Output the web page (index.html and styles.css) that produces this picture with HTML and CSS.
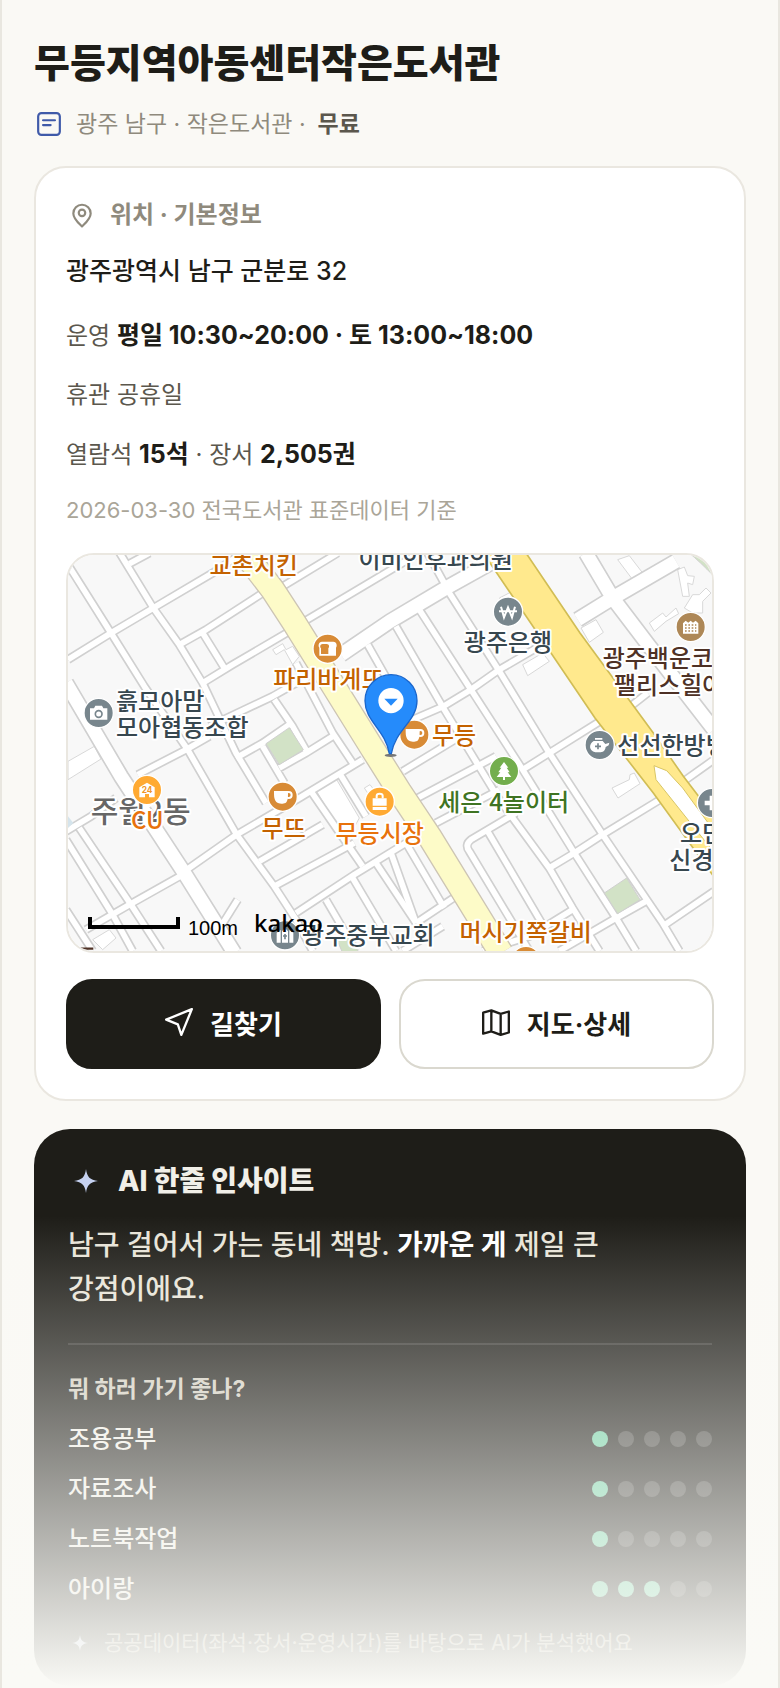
FILE: index.html
```html
<!DOCTYPE html>
<html lang="ko">
<head>
    <meta charset="UTF-8">
    <meta name="viewport" content="width=device-width, initial-scale=1.0">
    <title>무등지역아동센터작은도서관</title>
    <link rel="stylesheet" href="styles.css">
</head>
<body>
    <main class="page">
        <header class="page-header">
            <h1>무등지역아동센터작은도서관</h1>
            <p class="meta">
                <svg class="meta-icon" viewBox="0 0 24 24" aria-hidden="true">
                    <rect x="2" y="2" width="20" height="20" rx="3"/>
                    <path d="M6.500 8.500h11M6.500 13h7"/>
                </svg>
                <span>광주 남구 · 작은도서관 ·</span>
                <strong>무료</strong>
            </p>
        </header>

        <section class="card">
            <h2 class="card-title">
                <svg class="title-icon" viewBox="0 0 24 24" aria-hidden="true">
                    <path d="M20 10.500c0 5-5.500 9.500-8 12-2.500-2.500-8-7-8-12a8 8 0 0 1 16 0z"/>
                    <circle cx="12" cy="10" r="3"/>
                </svg>
                위치 · 기본정보
            </h2>
            <p class="address">광주광역시 남구 군분로 32</p>
            <ul class="info">
                <li>운영 <strong>평일 10:30~20:00 · 토 13:00~18:00</strong></li>
                <li>휴관 공휴일</li>
                <li>열람석 <strong>15석</strong> · 장서 <strong>2,505권</strong></li>
            </ul>
            <p class="source">2026-03-30 전국도서관 표준데이터 기준</p>

            <div class="map">
                <svg viewBox="6 6 1932 1188" preserveAspectRatio="xMidYMid slice">
                    <defs>
                        <g id="alleys">
                            <path d="M6 35L135 240 235 400 365 590 512 845 625 1000 690 1100 740 1194"/>
                            <path d="M155 -10L262 165 340 275 410 390 510 600 600 750"/>
                            <path d="M6 320L135 240 262 165 440 60 530 0M190 32L250 0"/>
                            <path d="M340 275L420 230 590 120M410 390L500 335 665 238M410 240L475 345"/>
                            <path d="M215 665L360 590 430 550M355 955L512 845 700 735 890 620M350 965L190 1055 60 1130"/>
                            <path d="M40 825L195 1055 285 1194M0 860L140 1085 200 1194M0 1070L80 1194M0 835L75 790 150 735"/>
                            <path d="M430 520L620 430 700 385M625 440L680 520 725 600M510 615L590 570 670 515M590 580L655 690M640 645L720 600 800 550"/>
                            <path d="M690 330L800 540 860 630M580 925L770 815M625 1000L865 870M690 1080L865 965 1020 870"/>
                            <path d="M735 715L890 940M820 660L900 790M780 1040L870 1194M860 975L990 1194M930 930L1050 1110"/>
                            <path d="M515 1040L465 1120M650 100L815 0M715 205L972 52 1060 0M905 275L970 390"/>
                            <path d="M1085 0L1140 100M990 220L1132 465 1300 740 1450 945 1520 1065 1600 1194"/>
                            <path d="M1060 170L1215 410 1370 650 1525 900 1650 1095 1710 1194"/>
                            <path d="M1150 120L1300 355 1450 600 1610 845 1790 1110 1840 1194"/>
                            <path d="M1040 500L1132 460 1215 410 1300 350 1420 280M1370 650L1450 600 1610 500M1450 945L1525 900 1610 845 1790 735"/>
                            <path d="M1010 655L1200 540M1055 735L1290 610M1110 810L1300 710M1250 1194L1390 1150 1520 1070"/>
                            <path d="M1350 780L1215 860Q1195 875 1210 895L1390 1194M1262 830L1430 1115M1480 1194L1650 1095 1740 1045M1790 1120L1944 1015"/>
                            <path d="M975 900L1050 1110M1020 870L1135 1065M1050 1110L1170 1030M1010 1194L1130 1120M1700 455L1745 420M1860 680L1944 620"/>
                        </g>
                        <g id="streets">
                            <path d="M0 390L165 670 355 960 505 1200"/>
                            <path d="M825 305L972 205 1140 105 1310 10"/>
                            <path d="M1535 200L1640 135 1830 25M1560 0L1640 135 1750 280 1944 530"/>
                        </g>
                    </defs>

                    <rect class="land" x="0" y="0" width="1944" height="1200"/>
                    <g class="building">
                        <path d="M6 625L85 580 105 618 6 680z"/>
                        <path d="M620 290L650 272 660 290 680 280 700 310 680 335 655 290 630 305z"/>
                        <path d="M752 715L812 680 880 795 850 850 820 830z"/>
                        <path d="M895 705L912 695 935 725 915 735z"/>
                        <path d="M80 1160L130 1130 150 1155 110 1190z"/>
                        <path d="M1300 135L1345 112 1360 140 1318 165z"/>
                        <path d="M1370 335L1430 300 1450 325 1385 368z"/>
                        <path d="M1545 225L1590 200 1612 238 1570 268z"/>
                        <path d="M1638 705L1690 680 1692 665 1705 660 1722 692 1656 735z"/>
                        <path d="M1655 20L1690 8 1730 60 1700 80z"/>
                        <path d="M1750 210L1790 180 1800 192 1830 165 1838 182 1800 205 1765 235z"/>
                        <path d="M1835 50L1855 42 1865 68 1885 70 1880 95 1865 90 1870 130 1850 130z"/>
                        <path d="M1855 165L1880 125 1900 125 1920 105 1935 120 1910 145 1910 180 1880 180z"/>
                    </g>

                    <use href="#alleys" class="alley-edge"/>
                    <use href="#streets" class="street-edge"/>
                    <use href="#alleys" class="alley"/>
                    <use href="#streets" class="street"/>

                    <g class="park">
                        <path d="M600 572L670 524 712 590 640 635z"/>
                        <path d="M1615 1020L1682 975 1722 1040 1655 1082z"/>
                        <path d="M1870 0Q1900 25 1944 70V0z"/>
                        <path d="M815 1165L850 1150 880 1200H830z"/>
                    </g>
                    <path class="water" d="M6 790L22 810 6 825z"/>

                    <path class="avenue-edge" d="M535 0L620 110 685 210 915 580 1000 715 1090 850 1305 1200"/>
                    <path class="avenue" d="M535 0L620 110 685 210 915 580 1000 715 1090 850 1305 1200"/>
                    <path class="highway" d="M1250 0L1272 30 1587 495 1762 720 1950 980V798L1852 670 1762 540 1542 240 1380 0z"/>
                    <path class="island" d="M1764 638L1802 653 1850 705 1928 812 1950 845V905L1880 818 1770 680z"/>

                    <!-- place labels -->
                    <g class="label">
                        <text class="food" x="563" y="63" text-anchor="middle">교촌치킨</text>
                        <text x="1109" y="45" text-anchor="middle">이비인후과의원</text>
                        <text class="food" x="787" y="405" text-anchor="middle">파리바게뜨</text>
                        <text x="150" y="470">흙모아맘</text>
                        <text x="150" y="549">모아협동조합</text>
                        <text class="district" x="224" y="807" text-anchor="middle">주월2동</text>
                        <text class="shop" x="244" y="828" text-anchor="middle">CU</text>
                        <text class="food" x="653" y="852" text-anchor="middle">무뜨</text>
                        <text class="shop" x="941" y="866" text-anchor="middle">무등시장</text>
                        <text x="907" y="1173" text-anchor="middle">광주중부교회</text>
                        <text x="1326" y="295" text-anchor="middle">광주은행</text>
                        <text class="food" x="1098" y="573">무등</text>
                        <text class="nature" x="1313" y="774" text-anchor="middle">세은 4놀이터</text>
                        <text class="home" x="1610" y="342">광주백운코</text>
                        <text class="home" x="1644" y="422">팰리스힐아</text>
                        <text x="1654" y="604">선선한방병</text>
                        <text x="1842" y="868">오민</text>
                        <text x="1810" y="947">신경외</text>
                        <text class="food" x="1379" y="1164" text-anchor="middle">머시기쪽갈비</text>
                    </g>

                    <!-- place markers -->
                    <g class="marker" transform="translate(98 480)">
                        <circle class="gray" r="44"/>
                        <path class="fill" d="M-26 -14h12l4-8h20l4 8h12v34h-52z"/>
                        <circle class="gray-line" cy="3" r="10"/>
                    </g>
                    <g class="marker" transform="translate(243 711)">
                        <circle class="amber" r="44"/>
                        <path class="fill" d="M-23 22v-30L0-22 23-8v30H6V12h-12v10z"/>
                        <text class="num" y="9" text-anchor="middle">24</text>
                    </g>
                    <g class="marker" transform="translate(650 731)">
                        <circle class="orange" r="44"/>
                        <path class="fill" d="M-26 -17h42v10c0 30-10 28-20 28s-22-4-22-28z"/>
                        <circle class="ring" cx="18" cy="-5" r="9"/>
                    </g>
                    <g class="marker" transform="translate(1045 545)">
                        <circle class="orange" r="44"/>
                        <path class="fill" d="M-26 -17h42v10c0 30-10 28-20 28s-22-4-22-28z"/>
                        <circle class="ring" cx="18" cy="-5" r="9"/>
                    </g>
                    <g class="marker" transform="translate(941 746)">
                        <circle class="amber" r="44"/>
                        <path class="fill" d="M-21 -10h42V12h-42zM-21 16h42v9h-42z"/>
                        <path class="ring" d="M-9 -10v-8q0-6 9-6t9 6v8"/>
                    </g>
                    <g class="marker" transform="translate(657 1147)">
                        <circle class="gray" r="44"/>
                        <path class="fill" d="M-25 22v-30l12-8v38zM25 22v-30l-12-8v38zM-9 22v-34L0-22 9-12v34z"/>
                        <path class="gray-line" d="M0-4v16M-6 2h12"/>
                    </g>
                    <g class="marker" transform="translate(785 287)">
                        <circle class="orange" r="44"/>
                        <path class="fill" d="M-17 -21h34c11 0 12 14 8 18v24h-50v-24c-4-4-3-18 8-18z"/>
                        <path class="crust" d="M-15 -14h12c8 0 9 9 5 13v17h-22v-17c-4-4-3-13 5-13z"/>
                    </g>
                    <g class="marker" transform="translate(1326 176)">
                        <circle class="gray" r="44"/>
                        <path class="ring" d="M-21 -15l9 32L0-13l12 30 9-32M-27 -1h54"/>
                    </g>
                    <g class="marker" transform="translate(1314 654)">
                        <circle class="green" r="44"/>
                        <path class="fill" d="M0-27l13 17H8l9 14h-6l11 14H3v9h-6v-9h-19l11-14h-6l9-14h-5z"/>
                    </g>
                    <g class="marker" transform="translate(1601 576)">
                        <circle class="gray" r="44"/>
                        <path class="fill" d="M-18 -12h27l8 9 12-4-2 8-9 5c-2 12-8 16-19 16h-12c-20-4-20-26-5-34zM-14 -21H8v5h-22z"/>
                        <path class="gray-line" d="M-5 -5v18M-14 4h18"/>
                    </g>
                    <g class="marker" transform="translate(1874 222)">
                        <circle class="brown" r="44"/>
                        <path class="fill" d="M-23 20v-31l8-8 8 6 7-6 7 6 8-6 8 8v31z"/>
                        <path class="windows" d="M-17 -6h34M-17 3h34M-17 12h34"/>
                    </g>
                    <g class="marker" transform="translate(1938 750)">
                        <circle class="gray" r="44"/>
                        <path class="fill" d="M-7 -22H7v15h15V7H7v15H-7V7h-15V-7h15z"/>
                    </g>
                    <g class="marker" transform="translate(1380 1224)">
                        <circle class="orange" r="44"/>
                    </g>
                    <path class="corner-mark" d="M44 1187h38"/>

                    <!-- library pin -->
                    <ellipse class="pin-shadow" cx="974" cy="607" rx="18" ry="5"/>
                    <path class="pin" d="M970 602C958 530 897 505 897 443a78 78 0 0 1 156 0C1053 505 988 530 976 602z"/>
                    <circle class="pin-hole" cx="975" cy="443" r="38"/>
                    <path class="pin-arrow" d="M955 437h40l-20 21z"/>

                    <!-- scale -->
                    <path class="scale-bar" d="M72 1092v30h264v-30"/>
                    <text class="scale-text" x="366" y="1145">100m</text>
                    <text class="brand" x="564" y="1138">kakao</text>
                </svg>
            </div>

            <div class="actions">
                <button type="button" class="btn btn-dark">
                    <svg viewBox="0 0 24 24" aria-hidden="true"><path d="M23 1L1 10l10 4 3 9z"/></svg>
                    길찾기
                </button>
                <button type="button" class="btn btn-light">
                    <svg viewBox="0 0 24 24" aria-hidden="true"><path d="M1 4l7-2 8 3 7-2v18l-7 2-8-3-7 2zM8 2v18M16 5v18"/></svg>
                    지도·상세
                </button>
            </div>
        </section>

        <section class="insight">
            <h2 class="insight-title">
                <svg viewBox="0 0 24 24" aria-hidden="true"><path d="M12 0c1 8 4 11 12 12-8 1-11 4-12 12-1-8-4-11-12-12 8-1 11-4 12-12z"/></svg>
                AI 한줄 인사이트
            </h2>
            <p class="insight-text">남구 걸어서 가는 동네 책방. <strong>가까운 게</strong> 제일 큰 강점이에요.</p>
            <h3>뭐 하러 가기 좋나?</h3>
            <ul class="scores">
                <li>조용공부 <span class="dots"><i class="on"></i><i></i><i></i><i></i><i></i></span></li>
                <li>자료조사 <span class="dots"><i class="on"></i><i></i><i></i><i></i><i></i></span></li>
                <li>노트북작업 <span class="dots"><i class="on"></i><i></i><i></i><i></i><i></i></span></li>
                <li>아이랑 <span class="dots"><i class="on"></i><i class="on"></i><i class="on"></i><i></i><i></i></span></li>
            </ul>
            <p class="insight-note">
                <svg viewBox="0 0 24 24" aria-hidden="true"><path d="M12 0c1 8 4 11 12 12-8 1-11 4-12 12-1-8-4-11-12-12 8-1 11-4 12-12z"/></svg>
                공공데이터(좌석·장서·운영시간)를 바탕으로 AI가 분석했어요
            </p>
        </section>
        <div class="fade"></div>
    </main>
</body>
</html>
```
FILE: styles.css
```css
* {
    box-sizing: border-box;
}

body {
    margin: 0;
    background-color: #faf9f5;
    color: #1e1d18;
    font-family: Inter, "Noto Sans CJK KR", sans-serif;
    font-size: 24px;
    line-height: 36px;
    word-break: keep-all;
}

h1, h2, h3, p, ul {
    margin: 0;
    padding: 0;
}

ul {
    list-style: none;
}

svg {
    flex-shrink: 0;
}

.page {
    position: relative;
    min-height: 100vh;
    padding: 36px 32px 0;
    border-left: 2px solid #e9e7e0;
    border-right: 2px solid #e9e7e0;
}

/* header */
h1 {
    font-size: 39px;
    font-weight: 800;
    line-height: 54px;
}

.meta {
    display: flex;
    align-items: center;
    margin: 16px 0 24px;
    color: #8f8a7d;
    font-size: 23px;
}

.meta strong {
    margin-left: 12px;
    color: #5b574d;
    font-weight: 600;
}

.meta-icon {
    width: 26px;
    height: 26px;
    margin: 0 14px 0 2px;
    fill: none;
    stroke: #3f5aa9;
    stroke-width: 2;
    stroke-linecap: round;
}

/* location card */
.card {
    padding: 29px 30px 30px;
    background-color: #fff;
    border: 2px solid #eae7e0;
    border-radius: 32px;
}

.card-title {
    display: flex;
    align-items: center;
    gap: 15px;
    padding-left: 3px;
    color: #8f8a7d;
    font-size: 24px;
    font-weight: 700;
}

.title-icon {
    width: 26px;
    height: 26px;
    fill: none;
    stroke: #8f8a7d;
    stroke-width: 2;
    stroke-linejoin: round;
}

.address {
    margin: 20px 0 28px;
    font-size: 25px;
    font-weight: 500;
}

.info {
    display: flex;
    flex-direction: column;
    gap: 23px;
    color: #5b574d;
}

.info strong {
    color: #1e1d18;
    font-size: 25px;
    font-weight: 700;
}

.source {
    margin: 22px 0 28px;
    color: #aaa598;
    font-size: 22px;
    line-height: 30px;
}

/* map */
.map {
    height: 400px;
    overflow: hidden;
    border: 2px solid #eae7e0;
    border-radius: 28px;
}

.map svg {
    display: block;
    width: 100%;
    height: 100%;
}

.land {
    fill: #f8f8f8;
}

.building {
    fill: #fff;
    stroke: #d8d8d8;
    stroke-width: 3;
}

.alley-edge, .alley, .street-edge, .street, .avenue-edge, .avenue {
    fill: none;
    stroke-linejoin: round;
}

.alley-edge {
    stroke: #d0d0d0;
    stroke-width: 27;
}

.alley {
    stroke: #fff;
    stroke-width: 17;
}

.street-edge {
    stroke: #d0d0d0;
    stroke-width: 50;
}

.street {
    stroke: #fff;
    stroke-width: 40;
}

.park {
    fill: #d2e2c6;
    stroke: #d0d0d0;
    stroke-width: 3;
}

.water {
    fill: #d5e4ec;
}

.avenue-edge {
    stroke: #cdc5b4;
    stroke-width: 77;
}

.avenue {
    stroke: #fdfbc8;
    stroke-width: 69;
}

.highway {
    fill: #ffe98d;
    stroke: #d1bd55;
    stroke-width: 5;
}

.island {
    fill: #fff;
    stroke: #d8c565;
    stroke-width: 3;
}

.label {
    fill: #37474f;
    stroke: #fff;
    stroke-width: 12;
    stroke-linejoin: round;
    paint-order: stroke;
    font-family: "Noto Sans CJK KR", sans-serif;
    font-size: 72px;
    font-weight: 500;
}

.food {
    fill: #c46200;
}

.shop {
    fill: #e8720c;
}

.nature {
    fill: #3f7423;
}

.home {
    fill: #4e3125;
}

.district {
    fill: #666;
    font-size: 90px;
}

.marker > circle:first-child {
    stroke: #fff;
    stroke-width: 4;
}

.gray {
    fill: #78868d;
}

.amber {
    fill: #ffaa33;
}

.orange {
    fill: #d88b36;
}

.green {
    fill: #73ae4d;
}

.brown {
    fill: #ae8857;
}

.fill {
    fill: #fff;
}

.ring {
    fill: none;
    stroke: #fff;
    stroke-width: 6;
}

.gray-line {
    fill: none;
    stroke: #78868d;
    stroke-width: 5;
}

.crust {
    fill: #d88b36;
}

.windows {
    stroke: #ae8857;
    stroke-width: 4;
    stroke-dasharray: 5 5;
}

.num {
    fill: #f0962a;
    font-size: 25px;
    font-weight: 700;
}

.corner-mark {
    stroke: #4e3125;
    stroke-width: 7;
}

.pin {
    fill: #258bfb;
    stroke: #1a66cc;
    stroke-width: 4;
}

.pin-hole {
    fill: #fff;
}

.pin-arrow {
    fill: #258bfb;
}

.pin-shadow {
    fill: #777;
}

.scale-bar {
    fill: none;
    stroke: #000;
    stroke-width: 12;
}

.scale-text {
    font-family: "Liberation Sans", Arial, sans-serif;
    font-size: 60px;
}

.brand {
    fill: #000;
    font-family: "Noto Sans", sans-serif;
    font-size: 72px;
    font-weight: 500;
}

/* buttons */
.actions {
    display: grid;
    grid-template-columns: 1fr 1fr;
    gap: 18px;
    margin-top: 26px;
}

.btn {
    display: flex;
    align-items: center;
    justify-content: center;
    gap: 17px;
    height: 90px;
    padding: 0 6px 4px;
    border: 2px solid #1e1d18;
    border-radius: 26px;
    font-family: inherit;
    font-size: 26px;
    font-weight: 700;
    cursor: pointer;
}

.btn svg {
    width: 28px;
    height: 28px;
    fill: none;
    stroke: currentColor;
    stroke-width: 2;
    stroke-linejoin: round;
}

.btn-dark {
    background-color: #1e1d18;
    color: #fff;
}

.btn-light {
    background-color: #fff;
    border-color: #dad8cf;
    color: #1e1d18;
}

/* AI insight */
.insight {
    margin-top: 28px;
    padding: 33px 34px 28px;
    background-color: #1e1d18;
    border-radius: 36px;
    color: #f1efe8;
}

.insight-title {
    display: flex;
    align-items: center;
    gap: 20px;
    padding-left: 6px;
    font-size: 28px;
    font-weight: 800;
    line-height: 38px;
}

.insight-title svg {
    width: 24px;
    height: 24px;
    fill: #c5d1f0;
}

.insight-text {
    margin-top: 23px;
    padding-bottom: 32px;
    border-bottom: 2px solid rgba(255, 255, 255, 0.12);
    color: #e8e4d8;
    font-size: 28px;
    font-weight: 500;
    line-height: 44px;
}

.insight-text strong {
    color: #fff;
    font-weight: 700;
}

.insight h3 {
    margin: 28px 0 17px;
    color: #d2cdc0;
    font-size: 23px;
    font-weight: 700;
    line-height: 32px;
}

.scores {
    display: flex;
    flex-direction: column;
    gap: 16px;
    font-weight: 500;
    line-height: 34px;
}

.scores li {
    display: flex;
    align-items: center;
    justify-content: space-between;
}

.dots {
    display: flex;
    gap: 10px;
}

.dots i {
    width: 16px;
    height: 16px;
    border-radius: 50%;
    background-color: rgba(255, 255, 255, 0.18);
}

.dots .on {
    background-color: #6fcfa3;
}

.insight-note {
    display: flex;
    align-items: center;
    gap: 16px;
    margin-top: 22px;
    padding-left: 4px;
    color: #aaa598;
    font-size: 21px;
    line-height: 30px;
}

.insight-note svg {
    width: 16px;
    height: 16px;
    fill: #c5d1f0;
}

/* bottom fade over the insight card */
.fade {
    position: absolute;
    right: 0;
    bottom: 0;
    left: 0;
    height: 472px;
    background: linear-gradient(to bottom, rgba(250, 250, 246, 0), #fafaf6);
    pointer-events: none;
}
```
